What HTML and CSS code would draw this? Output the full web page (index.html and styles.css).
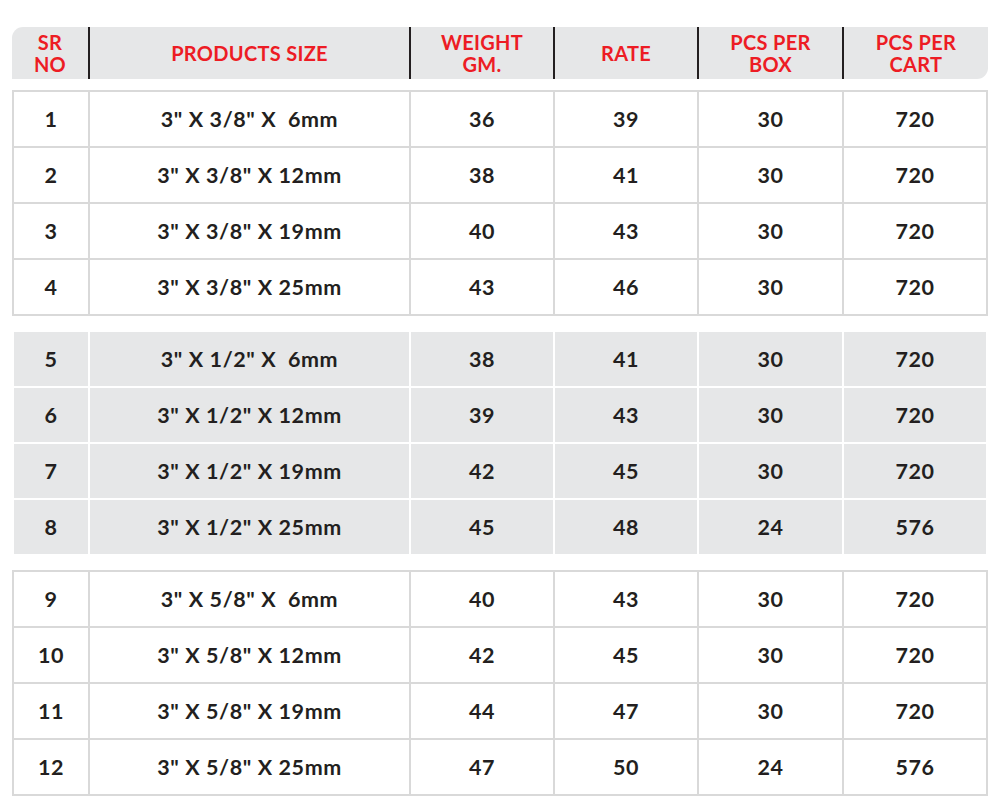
FILE: index.html
```html
<!DOCTYPE html>
<html lang="en">
<head>
<meta charset="utf-8">
<title>Products Size Rate Chart</title>
<link rel="stylesheet" href="styles.css">
</head>
<body>
<div class="sheet">
  <div class="head">
    <div class="hcell">SR<br>NO</div>
    <div class="hcell">PRODUCTS SIZE</div>
    <div class="hcell">WEIGHT<br>GM.</div>
    <div class="hcell">RATE</div>
    <div class="hcell">PCS PER<br>BOX</div>
    <div class="hcell">PCS PER<br>CART</div>
  </div>

  <div class="group plain">
    <div class="cell">1</div><div class="cell">3" X 3/8" X &nbsp;6mm</div><div class="cell">36</div><div class="cell">39</div><div class="cell">30</div><div class="cell">720</div>
    <div class="cell">2</div><div class="cell">3" X 3/8" X 12mm</div><div class="cell">38</div><div class="cell">41</div><div class="cell">30</div><div class="cell">720</div>
    <div class="cell">3</div><div class="cell">3" X 3/8" X 19mm</div><div class="cell">40</div><div class="cell">43</div><div class="cell">30</div><div class="cell">720</div>
    <div class="cell">4</div><div class="cell">3" X 3/8" X 25mm</div><div class="cell">43</div><div class="cell">46</div><div class="cell">30</div><div class="cell">720</div>
  </div>

  <div class="group shaded">
    <div class="cell">5</div><div class="cell">3" X 1/2" X &nbsp;6mm</div><div class="cell">38</div><div class="cell">41</div><div class="cell">30</div><div class="cell">720</div>
    <div class="cell">6</div><div class="cell">3" X 1/2" X 12mm</div><div class="cell">39</div><div class="cell">43</div><div class="cell">30</div><div class="cell">720</div>
    <div class="cell">7</div><div class="cell">3" X 1/2" X 19mm</div><div class="cell">42</div><div class="cell">45</div><div class="cell">30</div><div class="cell">720</div>
    <div class="cell">8</div><div class="cell">3" X 1/2" X 25mm</div><div class="cell">45</div><div class="cell">48</div><div class="cell">24</div><div class="cell">576</div>
  </div>

  <div class="group plain">
    <div class="cell">9</div><div class="cell">3" X 5/8" X &nbsp;6mm</div><div class="cell">40</div><div class="cell">43</div><div class="cell">30</div><div class="cell">720</div>
    <div class="cell">10</div><div class="cell">3" X 5/8" X 12mm</div><div class="cell">42</div><div class="cell">45</div><div class="cell">30</div><div class="cell">720</div>
    <div class="cell">11</div><div class="cell">3" X 5/8" X 19mm</div><div class="cell">44</div><div class="cell">47</div><div class="cell">30</div><div class="cell">720</div>
    <div class="cell">12</div><div class="cell">3" X 5/8" X 25mm</div><div class="cell">47</div><div class="cell">50</div><div class="cell">24</div><div class="cell">576</div>
  </div>
</div>
</body>
</html>
```

FILE: styles.css
```css
html, body {
  margin: 0;
  padding: 0;
  background: #ffffff;
}

body {
  font-family: "Lato", "Liberation Sans", sans-serif;
  font-weight: 700;
  color: #231f20;
}

.sheet {
  width: 976px;
  padding: 27px 0 0 12px;
  display: flex;
  flex-direction: column;
}

.head {
  display: grid;
  grid-template-columns: 76px 321px 144px 144px 145px 146px;
  height: 52px;
  background: #e6e7e8;
  border-radius: 11px 0 11px 0;
}

.hcell {
  display: flex;
  align-items: center;
  justify-content: center;
  text-align: center;
  color: #ed1c24;
  font-size: 20px;
  line-height: 22px;
  letter-spacing: 0.3px;
  padding-bottom: 1px;
}

.hcell + .hcell {
  border-left: 2px solid #231f20;
}

.group {
  display: grid;
  grid-template-columns: 74px 319px 142px 142px 143px 142px;
  grid-auto-rows: 54px;
  gap: 2px;
  padding: 2px;
  margin-top: 14px;
}

.head + .group {
  margin-top: 11px;
}

.plain {
  background: #d9d9d9;
}

.plain .cell {
  background: #ffffff;
}

.shaded {
  background: #ffffff;
}

.shaded .cell {
  background: #e6e7e8;
}

.cell {
  display: flex;
  align-items: center;
  justify-content: center;
  font-size: 21.5px;
  letter-spacing: 0.6px;
  padding-bottom: 1px;
}
```
